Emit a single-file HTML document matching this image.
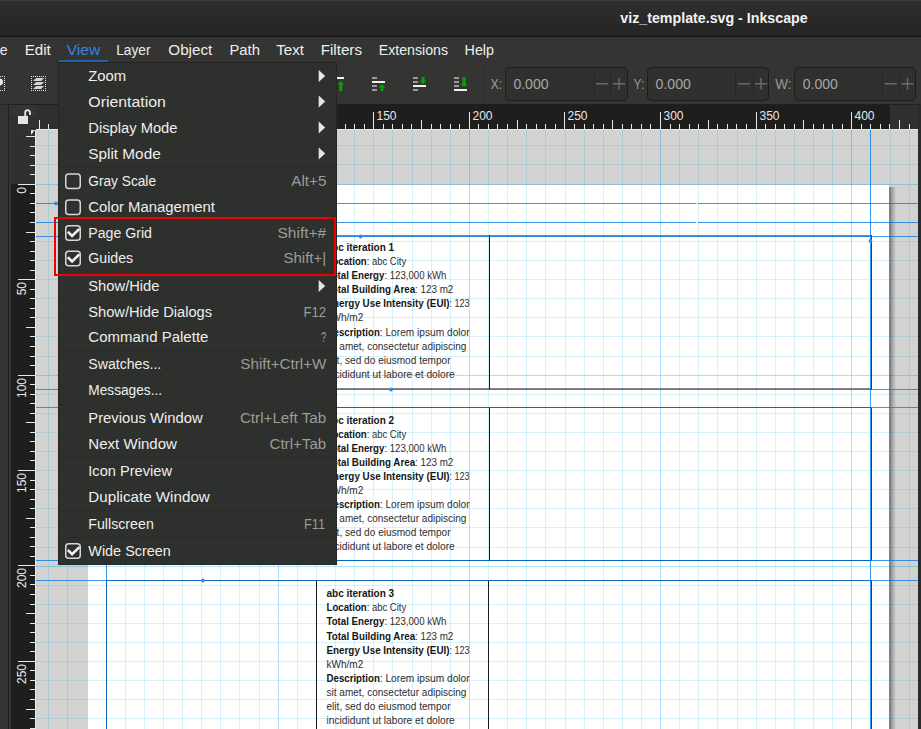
<!DOCTYPE html><html><head><meta charset="utf-8"><style>
html,body{margin:0;padding:0;background:#343532;width:921px;height:729px;overflow:hidden}
svg{display:block}
text{font-family:'Liberation Sans', sans-serif;white-space:pre}
</style></head><body>
<svg width="921" height="729" viewBox="0 0 921 729">
<rect x="0" y="0" width="921" height="729" fill="#343532"/>
<defs><linearGradient id="tg" x1="0" y1="0" x2="0" y2="1"><stop offset="0" stop-color="#2f2f2f"/><stop offset="1" stop-color="#252525"/></linearGradient></defs>
<rect x="0" y="0" width="921" height="36" fill="url(#tg)"/>
<rect x="0" y="36" width="921" height="1" fill="#141414"/>
<rect x="0" y="0" width="921" height="1" fill="#3a3a3a"/>
<rect x="0" y="62" width="921" height="1" fill="#30312e"/>
<rect x="0" y="104" width="921" height="1" fill="#282926"/>
<text x="620.3" y="22.9" font-size="15" fill="#f2f2f2" font-weight="bold" text-anchor="start" textLength="187.4" lengthAdjust="spacingAndGlyphs" >viz_template.svg - Inkscape</text>
<text x="7.6" y="54.6" font-size="14" fill="#eeeeec" font-weight="normal" text-anchor="end" >e</text>
<text x="24.7" y="54.6" font-size="14" fill="#eeeeec" font-weight="normal" text-anchor="start" textLength="26.1" lengthAdjust="spacingAndGlyphs" >Edit</text>
<text x="66.7" y="54.6" font-size="14" fill="#3584e4" font-weight="normal" text-anchor="start" textLength="33.5" lengthAdjust="spacingAndGlyphs" >View</text>
<text x="116.2" y="54.6" font-size="14" fill="#eeeeec" font-weight="normal" text-anchor="start" textLength="34.4" lengthAdjust="spacingAndGlyphs" >Layer</text>
<text x="168.3" y="54.6" font-size="14" fill="#eeeeec" font-weight="normal" text-anchor="start" textLength="44.0" lengthAdjust="spacingAndGlyphs" >Object</text>
<text x="229.4" y="54.6" font-size="14" fill="#eeeeec" font-weight="normal" text-anchor="start" textLength="30.5" lengthAdjust="spacingAndGlyphs" >Path</text>
<text x="276.2" y="54.6" font-size="14" fill="#eeeeec" font-weight="normal" text-anchor="start" textLength="27.7" lengthAdjust="spacingAndGlyphs" >Text</text>
<text x="320.7" y="54.6" font-size="14" fill="#eeeeec" font-weight="normal" text-anchor="start" textLength="41.3" lengthAdjust="spacingAndGlyphs" >Filters</text>
<text x="378.7" y="54.6" font-size="14" fill="#eeeeec" font-weight="normal" text-anchor="start" textLength="69.3" lengthAdjust="spacingAndGlyphs" >Extensions</text>
<text x="464.6" y="54.6" font-size="14" fill="#eeeeec" font-weight="normal" text-anchor="start" textLength="29.3" lengthAdjust="spacingAndGlyphs" >Help</text>
<rect x="59" y="60" width="49" height="2" fill="#1f5fb0"/>
<rect x="-10" y="76" width="1" height="1" fill="#e6e6e6"/><rect x="-10" y="90" width="1" height="1" fill="#e6e6e6"/><rect x="-8" y="76" width="1" height="1" fill="#e6e6e6"/><rect x="-8" y="90" width="1" height="1" fill="#e6e6e6"/><rect x="-6" y="76" width="1" height="1" fill="#e6e6e6"/><rect x="-6" y="90" width="1" height="1" fill="#e6e6e6"/><rect x="-4" y="76" width="1" height="1" fill="#e6e6e6"/><rect x="-4" y="90" width="1" height="1" fill="#e6e6e6"/><rect x="-2" y="76" width="1" height="1" fill="#e6e6e6"/><rect x="-2" y="90" width="1" height="1" fill="#e6e6e6"/><rect x="0" y="76" width="1" height="1" fill="#e6e6e6"/><rect x="0" y="90" width="1" height="1" fill="#e6e6e6"/><rect x="2" y="76" width="1" height="1" fill="#e6e6e6"/><rect x="2" y="90" width="1" height="1" fill="#e6e6e6"/><rect x="4" y="76" width="1" height="1" fill="#e6e6e6"/><rect x="4" y="90" width="1" height="1" fill="#e6e6e6"/><rect x="-10" y="76" width="1" height="1" fill="#e6e6e6"/><rect x="4" y="76" width="1" height="1" fill="#e6e6e6"/><rect x="-10" y="78" width="1" height="1" fill="#e6e6e6"/><rect x="4" y="78" width="1" height="1" fill="#e6e6e6"/><rect x="-10" y="80" width="1" height="1" fill="#e6e6e6"/><rect x="4" y="80" width="1" height="1" fill="#e6e6e6"/><rect x="-10" y="82" width="1" height="1" fill="#e6e6e6"/><rect x="4" y="82" width="1" height="1" fill="#e6e6e6"/><rect x="-10" y="84" width="1" height="1" fill="#e6e6e6"/><rect x="4" y="84" width="1" height="1" fill="#e6e6e6"/><rect x="-10" y="86" width="1" height="1" fill="#e6e6e6"/><rect x="4" y="86" width="1" height="1" fill="#e6e6e6"/><rect x="-10" y="88" width="1" height="1" fill="#e6e6e6"/><rect x="4" y="88" width="1" height="1" fill="#e6e6e6"/><rect x="-10" y="90" width="1" height="1" fill="#e6e6e6"/><rect x="4" y="90" width="1" height="1" fill="#e6e6e6"/>
<circle cx="-0.6" cy="82" r="3.6" fill="#e6e6e6"/>
<rect x="31" y="76" width="1" height="1" fill="#e6e6e6"/><rect x="31" y="90" width="1" height="1" fill="#e6e6e6"/><rect x="33" y="76" width="1" height="1" fill="#e6e6e6"/><rect x="33" y="90" width="1" height="1" fill="#e6e6e6"/><rect x="35" y="76" width="1" height="1" fill="#e6e6e6"/><rect x="35" y="90" width="1" height="1" fill="#e6e6e6"/><rect x="37" y="76" width="1" height="1" fill="#e6e6e6"/><rect x="37" y="90" width="1" height="1" fill="#e6e6e6"/><rect x="39" y="76" width="1" height="1" fill="#e6e6e6"/><rect x="39" y="90" width="1" height="1" fill="#e6e6e6"/><rect x="41" y="76" width="1" height="1" fill="#e6e6e6"/><rect x="41" y="90" width="1" height="1" fill="#e6e6e6"/><rect x="43" y="76" width="1" height="1" fill="#e6e6e6"/><rect x="43" y="90" width="1" height="1" fill="#e6e6e6"/><rect x="45" y="76" width="1" height="1" fill="#e6e6e6"/><rect x="45" y="90" width="1" height="1" fill="#e6e6e6"/><rect x="31" y="76" width="1" height="1" fill="#e6e6e6"/><rect x="45" y="76" width="1" height="1" fill="#e6e6e6"/><rect x="31" y="78" width="1" height="1" fill="#e6e6e6"/><rect x="45" y="78" width="1" height="1" fill="#e6e6e6"/><rect x="31" y="80" width="1" height="1" fill="#e6e6e6"/><rect x="45" y="80" width="1" height="1" fill="#e6e6e6"/><rect x="31" y="82" width="1" height="1" fill="#e6e6e6"/><rect x="45" y="82" width="1" height="1" fill="#e6e6e6"/><rect x="31" y="84" width="1" height="1" fill="#e6e6e6"/><rect x="45" y="84" width="1" height="1" fill="#e6e6e6"/><rect x="31" y="86" width="1" height="1" fill="#e6e6e6"/><rect x="45" y="86" width="1" height="1" fill="#e6e6e6"/><rect x="31" y="88" width="1" height="1" fill="#e6e6e6"/><rect x="45" y="88" width="1" height="1" fill="#e6e6e6"/><rect x="31" y="90" width="1" height="1" fill="#e6e6e6"/><rect x="45" y="90" width="1" height="1" fill="#e6e6e6"/>
<path d="M33 81 L36.2 78 L44 78 L41.2 81 Z" fill="#d4d4d2"/>
<path d="M33 85 L36.2 82 L44 82 L41.2 85 Z" fill="#d4d4d2"/>
<path d="M33 89 L36.2 86 L44 86 L41.2 89 Z" fill="#d4d4d2"/>
<rect x="337" y="77" width="7" height="2" fill="#f0f0f0"/>
<path d="M340.8 81 L344.3 84.5 L342.3 84.5 L342.3 91 L339.3 91 L339.3 84.5 L337.3 84.5 Z" fill="#00a300"/>
<rect x="372" y="77" width="5" height="2" fill="#9a9a9a"/>
<rect x="372" y="85" width="5" height="2" fill="#9a9a9a"/>
<rect x="372" y="89" width="5" height="2" fill="#9a9a9a"/>
<rect x="372" y="81" width="13" height="2" fill="#f0f0f0"/>
<path d="M382 84 L385.5 87.5 L383.5 87.5 L383.5 91 L380.5 91 L380.5 87.5 L378.5 87.5 Z" fill="#00a300"/>
<rect x="413" y="77" width="5" height="2" fill="#9a9a9a"/>
<rect x="413" y="81" width="5" height="2" fill="#9a9a9a"/>
<rect x="413" y="89" width="5" height="2" fill="#9a9a9a"/>
<rect x="413" y="85" width="13" height="2" fill="#f0f0f0"/>
<path d="M423 84 L426.5 80.5 L424.5 80.5 L424.5 77 L421.5 77 L421.5 80.5 L419.5 80.5 Z" fill="#00a300"/>
<rect x="454" y="77" width="5" height="2" fill="#9a9a9a"/>
<rect x="454" y="81" width="5" height="2" fill="#9a9a9a"/>
<rect x="454" y="85" width="5" height="2" fill="#9a9a9a"/>
<rect x="454" y="89" width="13" height="2" fill="#f0f0f0"/>
<path d="M464 87 L467.5 83.5 L465.5 83.5 L465.5 77 L462.5 77 L462.5 83.5 L460.5 83.5 Z" fill="#00a300"/>
<rect x="484" y="67" width="1" height="33" fill="#2b2b2b"/>
<text x="490.4" y="88.9" font-size="14" fill="#9a9a98" font-weight="normal" text-anchor="start" textLength="11.8" lengthAdjust="spacingAndGlyphs" >X:</text>
<rect x="505.5" y="67.5" width="122" height="33" rx="4" fill="#30312e" stroke="#1d1e1c" stroke-width="1"/>
<rect x="594" y="68" width="1" height="32" fill="#282927"/>
<rect x="610" y="68" width="1" height="32" fill="#282927"/>
<text x="513.4" y="88.9" font-size="14" fill="#a6a6a4" font-weight="normal" text-anchor="start" textLength="35.2" lengthAdjust="spacingAndGlyphs" >0.000</text>
<rect x="596.0" y="83" width="12" height="1.5" fill="#6a6a68"/>
<rect x="613.0" y="83" width="12" height="1.5" fill="#6a6a68"/>
<rect x="618.25" y="78" width="1.5" height="11.5" fill="#6a6a68"/>
<text x="633.6" y="88.9" font-size="14" fill="#9a9a98" font-weight="normal" text-anchor="start" textLength="10.7" lengthAdjust="spacingAndGlyphs" >Y:</text>
<rect x="647.5" y="67.5" width="121" height="33" rx="4" fill="#30312e" stroke="#1d1e1c" stroke-width="1"/>
<rect x="735" y="68" width="1" height="32" fill="#282927"/>
<rect x="753" y="68" width="1" height="32" fill="#282927"/>
<text x="655.6" y="88.9" font-size="14" fill="#a6a6a4" font-weight="normal" text-anchor="start" textLength="35.2" lengthAdjust="spacingAndGlyphs" >0.000</text>
<rect x="738.0" y="83" width="12" height="1.5" fill="#6a6a68"/>
<rect x="755.0" y="83" width="12" height="1.5" fill="#6a6a68"/>
<rect x="760.25" y="78" width="1.5" height="11.5" fill="#6a6a68"/>
<text x="775.2" y="88.9" font-size="14" fill="#9a9a98" font-weight="normal" text-anchor="start" textLength="16.2" lengthAdjust="spacingAndGlyphs" >W:</text>
<rect x="794.5" y="67.5" width="121" height="33" rx="4" fill="#30312e" stroke="#1d1e1c" stroke-width="1"/>
<rect x="882" y="68" width="1" height="32" fill="#282927"/>
<rect x="899" y="68" width="1" height="32" fill="#282927"/>
<text x="802.7" y="88.9" font-size="14" fill="#a6a6a4" font-weight="normal" text-anchor="start" textLength="35.2" lengthAdjust="spacingAndGlyphs" >0.000</text>
<rect x="884.5" y="83" width="12" height="1.5" fill="#6a6a68"/>
<rect x="901.5" y="83" width="12" height="1.5" fill="#6a6a68"/>
<rect x="906.75" y="78" width="1.5" height="11.5" fill="#6a6a68"/>
<rect x="8" y="105" width="1" height="624" fill="#1f201e"/>
<rect x="11" y="116" width="25" height="13" fill="#30312e"/>
<rect x="18" y="116" width="10" height="8" fill="#e6e6e6"/>
<path d="M25.2 116 L25.2 112.5 A2.4 2.4 0 0 1 30 112.5 L30 115" fill="none" stroke="#e6e6e6" stroke-width="1.8"/>
<defs><clipPath id="cv"><rect x="36" y="130" width="882" height="599"/></clipPath><linearGradient id="sh" x1="0" x2="1"><stop offset="0" stop-color="#000" stop-opacity="0.42"/><stop offset="1" stop-color="#000" stop-opacity="0"/></linearGradient></defs>
<g clip-path="url(#cv)" shape-rendering="crispEdges">
<rect x="36" y="130" width="882" height="599" fill="#d2d2d0"/>
<rect x="87" y="185" width="802" height="729" fill="#ffffff"/>
<rect x="48" y="130" width="1" height="599" fill="rgb(0,160,230)" fill-opacity="0.15"/><rect x="67" y="130" width="1" height="599" fill="rgb(0,160,230)" fill-opacity="0.15"/><rect x="87" y="130" width="1" height="599" fill="rgb(0,160,230)" fill-opacity="0.32"/><rect x="106" y="130" width="1" height="599" fill="rgb(0,160,230)" fill-opacity="0.15"/><rect x="125" y="130" width="1" height="599" fill="rgb(0,160,230)" fill-opacity="0.15"/><rect x="144" y="130" width="1" height="599" fill="rgb(0,160,230)" fill-opacity="0.15"/><rect x="163" y="130" width="1" height="599" fill="rgb(0,160,230)" fill-opacity="0.15"/><rect x="182" y="130" width="1" height="599" fill="rgb(0,160,230)" fill-opacity="0.15"/><rect x="201" y="130" width="1" height="599" fill="rgb(0,160,230)" fill-opacity="0.15"/><rect x="220" y="130" width="1" height="599" fill="rgb(0,160,230)" fill-opacity="0.15"/><rect x="239" y="130" width="1" height="599" fill="rgb(0,160,230)" fill-opacity="0.15"/><rect x="259" y="130" width="1" height="599" fill="rgb(0,160,230)" fill-opacity="0.15"/><rect x="278" y="130" width="1" height="599" fill="rgb(0,160,230)" fill-opacity="0.32"/><rect x="297" y="130" width="1" height="599" fill="rgb(0,160,230)" fill-opacity="0.15"/><rect x="316" y="130" width="1" height="599" fill="rgb(0,160,230)" fill-opacity="0.15"/><rect x="335" y="130" width="1" height="599" fill="rgb(0,160,230)" fill-opacity="0.15"/><rect x="354" y="130" width="1" height="599" fill="rgb(0,160,230)" fill-opacity="0.15"/><rect x="373" y="130" width="1" height="599" fill="rgb(0,160,230)" fill-opacity="0.15"/><rect x="392" y="130" width="1" height="599" fill="rgb(0,160,230)" fill-opacity="0.15"/><rect x="412" y="130" width="1" height="599" fill="rgb(0,160,230)" fill-opacity="0.15"/><rect x="431" y="130" width="1" height="599" fill="rgb(0,160,230)" fill-opacity="0.15"/><rect x="450" y="130" width="1" height="599" fill="rgb(0,160,230)" fill-opacity="0.15"/><rect x="469" y="130" width="1" height="599" fill="rgb(0,160,230)" fill-opacity="0.32"/><rect x="488" y="130" width="1" height="599" fill="rgb(0,160,230)" fill-opacity="0.15"/><rect x="507" y="130" width="1" height="599" fill="rgb(0,160,230)" fill-opacity="0.15"/><rect x="526" y="130" width="1" height="599" fill="rgb(0,160,230)" fill-opacity="0.15"/><rect x="545" y="130" width="1" height="599" fill="rgb(0,160,230)" fill-opacity="0.15"/><rect x="565" y="130" width="1" height="599" fill="rgb(0,160,230)" fill-opacity="0.15"/><rect x="584" y="130" width="1" height="599" fill="rgb(0,160,230)" fill-opacity="0.15"/><rect x="603" y="130" width="1" height="599" fill="rgb(0,160,230)" fill-opacity="0.15"/><rect x="622" y="130" width="1" height="599" fill="rgb(0,160,230)" fill-opacity="0.15"/><rect x="641" y="130" width="1" height="599" fill="rgb(0,160,230)" fill-opacity="0.15"/><rect x="660" y="130" width="1" height="599" fill="rgb(0,160,230)" fill-opacity="0.32"/><rect x="679" y="130" width="1" height="599" fill="rgb(0,160,230)" fill-opacity="0.15"/><rect x="698" y="130" width="1" height="599" fill="rgb(0,160,230)" fill-opacity="0.15"/><rect x="717" y="130" width="1" height="599" fill="rgb(0,160,230)" fill-opacity="0.15"/><rect x="737" y="130" width="1" height="599" fill="rgb(0,160,230)" fill-opacity="0.15"/><rect x="756" y="130" width="1" height="599" fill="rgb(0,160,230)" fill-opacity="0.15"/><rect x="775" y="130" width="1" height="599" fill="rgb(0,160,230)" fill-opacity="0.15"/><rect x="794" y="130" width="1" height="599" fill="rgb(0,160,230)" fill-opacity="0.15"/><rect x="813" y="130" width="1" height="599" fill="rgb(0,160,230)" fill-opacity="0.15"/><rect x="832" y="130" width="1" height="599" fill="rgb(0,160,230)" fill-opacity="0.15"/><rect x="851" y="130" width="1" height="599" fill="rgb(0,160,230)" fill-opacity="0.32"/><rect x="870" y="130" width="1" height="599" fill="rgb(0,160,230)" fill-opacity="0.15"/><rect x="890" y="130" width="1" height="599" fill="rgb(0,160,230)" fill-opacity="0.15"/><rect x="909" y="130" width="1" height="599" fill="rgb(0,160,230)" fill-opacity="0.15"/><rect x="36" y="145" width="882" height="1" fill="rgb(0,160,230)" fill-opacity="0.15"/><rect x="36" y="164" width="882" height="1" fill="rgb(0,160,230)" fill-opacity="0.15"/><rect x="36" y="184" width="882" height="1" fill="rgb(0,160,230)" fill-opacity="0.32"/><rect x="36" y="203" width="882" height="1" fill="rgb(0,160,230)" fill-opacity="0.15"/><rect x="36" y="222" width="882" height="1" fill="rgb(0,160,230)" fill-opacity="0.15"/><rect x="36" y="241" width="882" height="1" fill="rgb(0,160,230)" fill-opacity="0.15"/><rect x="36" y="260" width="882" height="1" fill="rgb(0,160,230)" fill-opacity="0.15"/><rect x="36" y="279" width="882" height="1" fill="rgb(0,160,230)" fill-opacity="0.15"/><rect x="36" y="298" width="882" height="1" fill="rgb(0,160,230)" fill-opacity="0.15"/><rect x="36" y="317" width="882" height="1" fill="rgb(0,160,230)" fill-opacity="0.15"/><rect x="36" y="336" width="882" height="1" fill="rgb(0,160,230)" fill-opacity="0.15"/><rect x="36" y="356" width="882" height="1" fill="rgb(0,160,230)" fill-opacity="0.15"/><rect x="36" y="375" width="882" height="1" fill="rgb(0,160,230)" fill-opacity="0.32"/><rect x="36" y="394" width="882" height="1" fill="rgb(0,160,230)" fill-opacity="0.15"/><rect x="36" y="413" width="882" height="1" fill="rgb(0,160,230)" fill-opacity="0.15"/><rect x="36" y="432" width="882" height="1" fill="rgb(0,160,230)" fill-opacity="0.15"/><rect x="36" y="451" width="882" height="1" fill="rgb(0,160,230)" fill-opacity="0.15"/><rect x="36" y="470" width="882" height="1" fill="rgb(0,160,230)" fill-opacity="0.15"/><rect x="36" y="489" width="882" height="1" fill="rgb(0,160,230)" fill-opacity="0.15"/><rect x="36" y="508" width="882" height="1" fill="rgb(0,160,230)" fill-opacity="0.15"/><rect x="36" y="527" width="882" height="1" fill="rgb(0,160,230)" fill-opacity="0.15"/><rect x="36" y="547" width="882" height="1" fill="rgb(0,160,230)" fill-opacity="0.15"/><rect x="36" y="566" width="882" height="1" fill="rgb(0,160,230)" fill-opacity="0.32"/><rect x="36" y="585" width="882" height="1" fill="rgb(0,160,230)" fill-opacity="0.15"/><rect x="36" y="604" width="882" height="1" fill="rgb(0,160,230)" fill-opacity="0.15"/><rect x="36" y="623" width="882" height="1" fill="rgb(0,160,230)" fill-opacity="0.15"/><rect x="36" y="642" width="882" height="1" fill="rgb(0,160,230)" fill-opacity="0.15"/><rect x="36" y="661" width="882" height="1" fill="rgb(0,160,230)" fill-opacity="0.15"/><rect x="36" y="680" width="882" height="1" fill="rgb(0,160,230)" fill-opacity="0.15"/><rect x="36" y="699" width="882" height="1" fill="rgb(0,160,230)" fill-opacity="0.15"/><rect x="36" y="718" width="882" height="1" fill="rgb(0,160,230)" fill-opacity="0.15"/>
<rect x="106" y="235" width="766" height="1" fill="#3a3a3a" fill-opacity="0.6"/>
<rect x="106" y="236" width="766" height="1" fill="#3a3a3a" fill-opacity="0.45"/>
<rect x="106" y="388" width="766" height="1" fill="#3a3a3a" fill-opacity="0.6"/>
<rect x="106" y="389" width="766" height="1" fill="#3a3a3a" fill-opacity="0.45"/>
<rect x="106" y="235" width="1" height="155" fill="#3a3a3a"/>
<rect x="871" y="235" width="1" height="155" fill="#3a3a3a"/>
<rect x="316" y="235" width="1" height="155" fill="#121920"/>
<rect x="489" y="235" width="1" height="155" fill="#121920"/>
<rect x="106" y="407" width="766" height="1" fill="#3a3a3a" fill-opacity="1.0"/>
<rect x="106" y="560" width="766" height="1" fill="#3a3a3a" fill-opacity="1.0"/>
<rect x="106" y="407" width="1" height="154" fill="#3a3a3a"/>
<rect x="871" y="407" width="1" height="154" fill="#3a3a3a"/>
<rect x="316" y="407" width="1" height="154" fill="#121920"/>
<rect x="489" y="407" width="1" height="154" fill="#121920"/>
<rect x="106" y="580" width="766" height="1" fill="#3a3a3a" fill-opacity="1.0"/>
<rect x="106" y="900" width="766" height="1" fill="#3a3a3a" fill-opacity="1.0"/>
<rect x="106" y="580" width="1" height="321" fill="#3a3a3a"/>
<rect x="871" y="580" width="1" height="321" fill="#3a3a3a"/>
<rect x="316" y="580" width="1" height="321" fill="#121920"/>
<rect x="488" y="580" width="1" height="321" fill="#121920"/>
<rect x="889" y="187" width="7" height="729" fill="url(#sh)" shape-rendering="auto"/>
<rect x="36" y="203" width="882" height="1" fill="rgb(0,120,230)" fill-opacity="0.75"/>
<rect x="36" y="222" width="882" height="1" fill="rgb(0,120,230)" fill-opacity="0.75"/>
<rect x="36" y="236" width="882" height="1" fill="rgb(0,120,230)" fill-opacity="0.75"/>
<rect x="36" y="389" width="882" height="1" fill="rgb(0,120,230)" fill-opacity="0.75"/>
<rect x="36" y="407" width="882" height="1" fill="rgb(0,120,230)" fill-opacity="0.75"/>
<rect x="36" y="560" width="882" height="1" fill="rgb(0,120,230)" fill-opacity="0.75"/>
<rect x="36" y="580" width="882" height="1" fill="rgb(0,120,230)" fill-opacity="0.75"/>
<rect x="106" y="130" width="1" height="599" fill="rgb(0,120,230)" fill-opacity="0.75"/>
<rect x="870" y="130" width="1" height="599" fill="rgb(0,120,230)" fill-opacity="0.75"/>
<rect x="696" y="203" width="2" height="1" fill="#d9f1fb"/>
<rect x="696" y="222" width="2" height="1" fill="#d9f1fb"/>
</g>
<circle cx="360.6" cy="236.5" r="1.9" fill="rgb(40,140,235)"/>
<circle cx="391" cy="389.5" r="1.9" fill="rgb(40,140,235)"/>
<circle cx="203" cy="580.5" r="1.9" fill="rgb(40,140,235)"/>
<circle cx="870.5" cy="241" r="1.9" fill="rgb(40,140,235)"/>
<circle cx="56" cy="203.5" r="1.9" fill="rgb(40,140,235)"/>
<text x="326.5" y="250.9" font-size="10" fill="#151515" font-weight="bold" text-anchor="start" textLength="67.6" lengthAdjust="spacingAndGlyphs" >abc iteration 1</text>
<text x="326.5" y="265.0" font-size="10" fill="#151515" font-weight="bold" text-anchor="start" textLength="40.2" lengthAdjust="spacingAndGlyphs" >Location</text>
<text x="366.7" y="265.0" font-size="10" fill="#2e2e2e" font-weight="normal" text-anchor="start" textLength="39.5" lengthAdjust="spacingAndGlyphs" >: abc City</text>
<text x="326.5" y="279.1" font-size="10" fill="#151515" font-weight="bold" text-anchor="start" textLength="57.9" lengthAdjust="spacingAndGlyphs" >Total Energy</text>
<text x="384.4" y="279.1" font-size="10" fill="#2e2e2e" font-weight="normal" text-anchor="start" textLength="62.0" lengthAdjust="spacingAndGlyphs" >: 123,000 kWh</text>
<text x="326.5" y="293.2" font-size="10" fill="#151515" font-weight="bold" text-anchor="start" textLength="88.6" lengthAdjust="spacingAndGlyphs" >Total Building Area</text>
<text x="415.1" y="293.2" font-size="10" fill="#2e2e2e" font-weight="normal" text-anchor="start" textLength="38.2" lengthAdjust="spacingAndGlyphs" >: 123 m2</text>
<text x="326.5" y="307.3" font-size="10" fill="#151515" font-weight="bold" text-anchor="start" textLength="123.0" lengthAdjust="spacingAndGlyphs" >Energy Use Intensity (EUI)</text>
<text x="449.5" y="307.3" font-size="10" fill="#2e2e2e" font-weight="normal" text-anchor="start" textLength="20.1" lengthAdjust="spacingAndGlyphs" >: 123</text>
<text x="326.5" y="321.4" font-size="10" fill="#2e2e2e" font-weight="normal" text-anchor="start" textLength="36.8" lengthAdjust="spacingAndGlyphs" >kWh/m2</text>
<text x="326.5" y="335.5" font-size="10" fill="#151515" font-weight="bold" text-anchor="start" textLength="53.3" lengthAdjust="spacingAndGlyphs" >Description</text>
<text x="379.8" y="335.5" font-size="10" fill="#2e2e2e" font-weight="normal" text-anchor="start" textLength="89.8" lengthAdjust="spacingAndGlyphs" >: Lorem ipsum dolor</text>
<text x="326.5" y="349.6" font-size="10" fill="#2e2e2e" font-weight="normal" text-anchor="start" textLength="139.9" lengthAdjust="spacingAndGlyphs" >sit amet, consectetur adipiscing</text>
<text x="326.5" y="363.7" font-size="10" fill="#2e2e2e" font-weight="normal" text-anchor="start" textLength="124.1" lengthAdjust="spacingAndGlyphs" >elit, sed do eiusmod tempor</text>
<text x="326.5" y="377.8" font-size="10" fill="#2e2e2e" font-weight="normal" text-anchor="start" textLength="128.3" lengthAdjust="spacingAndGlyphs" >incididunt ut labore et dolore</text>
<text x="326.5" y="423.5" font-size="10" fill="#151515" font-weight="bold" text-anchor="start" textLength="67.6" lengthAdjust="spacingAndGlyphs" >abc iteration 2</text>
<text x="326.5" y="437.6" font-size="10" fill="#151515" font-weight="bold" text-anchor="start" textLength="40.2" lengthAdjust="spacingAndGlyphs" >Location</text>
<text x="366.7" y="437.6" font-size="10" fill="#2e2e2e" font-weight="normal" text-anchor="start" textLength="39.5" lengthAdjust="spacingAndGlyphs" >: abc City</text>
<text x="326.5" y="451.7" font-size="10" fill="#151515" font-weight="bold" text-anchor="start" textLength="57.9" lengthAdjust="spacingAndGlyphs" >Total Energy</text>
<text x="384.4" y="451.7" font-size="10" fill="#2e2e2e" font-weight="normal" text-anchor="start" textLength="62.0" lengthAdjust="spacingAndGlyphs" >: 123,000 kWh</text>
<text x="326.5" y="465.8" font-size="10" fill="#151515" font-weight="bold" text-anchor="start" textLength="88.6" lengthAdjust="spacingAndGlyphs" >Total Building Area</text>
<text x="415.1" y="465.8" font-size="10" fill="#2e2e2e" font-weight="normal" text-anchor="start" textLength="38.2" lengthAdjust="spacingAndGlyphs" >: 123 m2</text>
<text x="326.5" y="479.9" font-size="10" fill="#151515" font-weight="bold" text-anchor="start" textLength="123.0" lengthAdjust="spacingAndGlyphs" >Energy Use Intensity (EUI)</text>
<text x="449.5" y="479.9" font-size="10" fill="#2e2e2e" font-weight="normal" text-anchor="start" textLength="20.1" lengthAdjust="spacingAndGlyphs" >: 123</text>
<text x="326.5" y="494.0" font-size="10" fill="#2e2e2e" font-weight="normal" text-anchor="start" textLength="36.8" lengthAdjust="spacingAndGlyphs" >kWh/m2</text>
<text x="326.5" y="508.1" font-size="10" fill="#151515" font-weight="bold" text-anchor="start" textLength="53.3" lengthAdjust="spacingAndGlyphs" >Description</text>
<text x="379.8" y="508.1" font-size="10" fill="#2e2e2e" font-weight="normal" text-anchor="start" textLength="89.8" lengthAdjust="spacingAndGlyphs" >: Lorem ipsum dolor</text>
<text x="326.5" y="522.2" font-size="10" fill="#2e2e2e" font-weight="normal" text-anchor="start" textLength="139.9" lengthAdjust="spacingAndGlyphs" >sit amet, consectetur adipiscing</text>
<text x="326.5" y="536.3" font-size="10" fill="#2e2e2e" font-weight="normal" text-anchor="start" textLength="124.1" lengthAdjust="spacingAndGlyphs" >elit, sed do eiusmod tempor</text>
<text x="326.5" y="550.4" font-size="10" fill="#2e2e2e" font-weight="normal" text-anchor="start" textLength="128.3" lengthAdjust="spacingAndGlyphs" >incididunt ut labore et dolore</text>
<text x="326.5" y="597.2" font-size="10" fill="#151515" font-weight="bold" text-anchor="start" textLength="67.6" lengthAdjust="spacingAndGlyphs" >abc iteration 3</text>
<text x="326.5" y="611.3" font-size="10" fill="#151515" font-weight="bold" text-anchor="start" textLength="40.2" lengthAdjust="spacingAndGlyphs" >Location</text>
<text x="366.7" y="611.3" font-size="10" fill="#2e2e2e" font-weight="normal" text-anchor="start" textLength="39.5" lengthAdjust="spacingAndGlyphs" >: abc City</text>
<text x="326.5" y="625.4" font-size="10" fill="#151515" font-weight="bold" text-anchor="start" textLength="57.9" lengthAdjust="spacingAndGlyphs" >Total Energy</text>
<text x="384.4" y="625.4" font-size="10" fill="#2e2e2e" font-weight="normal" text-anchor="start" textLength="62.0" lengthAdjust="spacingAndGlyphs" >: 123,000 kWh</text>
<text x="326.5" y="639.5" font-size="10" fill="#151515" font-weight="bold" text-anchor="start" textLength="88.6" lengthAdjust="spacingAndGlyphs" >Total Building Area</text>
<text x="415.1" y="639.5" font-size="10" fill="#2e2e2e" font-weight="normal" text-anchor="start" textLength="38.2" lengthAdjust="spacingAndGlyphs" >: 123 m2</text>
<text x="326.5" y="653.6" font-size="10" fill="#151515" font-weight="bold" text-anchor="start" textLength="123.0" lengthAdjust="spacingAndGlyphs" >Energy Use Intensity (EUI)</text>
<text x="449.5" y="653.6" font-size="10" fill="#2e2e2e" font-weight="normal" text-anchor="start" textLength="20.1" lengthAdjust="spacingAndGlyphs" >: 123</text>
<text x="326.5" y="667.7" font-size="10" fill="#2e2e2e" font-weight="normal" text-anchor="start" textLength="36.8" lengthAdjust="spacingAndGlyphs" >kWh/m2</text>
<text x="326.5" y="681.8" font-size="10" fill="#151515" font-weight="bold" text-anchor="start" textLength="53.3" lengthAdjust="spacingAndGlyphs" >Description</text>
<text x="379.8" y="681.8" font-size="10" fill="#2e2e2e" font-weight="normal" text-anchor="start" textLength="89.8" lengthAdjust="spacingAndGlyphs" >: Lorem ipsum dolor</text>
<text x="326.5" y="695.9" font-size="10" fill="#2e2e2e" font-weight="normal" text-anchor="start" textLength="139.9" lengthAdjust="spacingAndGlyphs" >sit amet, consectetur adipiscing</text>
<text x="326.5" y="710.0" font-size="10" fill="#2e2e2e" font-weight="normal" text-anchor="start" textLength="124.1" lengthAdjust="spacingAndGlyphs" >elit, sed do eiusmod tempor</text>
<text x="326.5" y="724.1" font-size="10" fill="#2e2e2e" font-weight="normal" text-anchor="start" textLength="128.3" lengthAdjust="spacingAndGlyphs" >incididunt ut labore et dolore</text>
<g shape-rendering="crispEdges">
<rect x="36" y="105" width="882" height="24" fill="#30312e"/>
<rect x="87" y="105" width="803" height="24" fill="#1e1f1d"/>
<rect x="36" y="129" width="882" height="1" fill="#e8e8e8"/>
<rect x="9" y="104" width="909" height="1" fill="#1f201e"/>
<rect x="39" y="120" width="1" height="9" fill="#e8e8e8"/><rect x="48" y="124" width="1" height="5" fill="#e8e8e8"/><rect x="58" y="124" width="1" height="5" fill="#e8e8e8"/><rect x="67" y="124" width="1" height="5" fill="#e8e8e8"/><rect x="77" y="124" width="1" height="5" fill="#e8e8e8"/><rect x="86" y="112" width="1" height="17" fill="#e8e8e8"/><rect x="96" y="124" width="1" height="5" fill="#e8e8e8"/><rect x="106" y="124" width="1" height="5" fill="#e8e8e8"/><rect x="115" y="124" width="1" height="5" fill="#e8e8e8"/><rect x="125" y="124" width="1" height="5" fill="#e8e8e8"/><rect x="134" y="120" width="1" height="9" fill="#e8e8e8"/><rect x="144" y="124" width="1" height="5" fill="#e8e8e8"/><rect x="153" y="124" width="1" height="5" fill="#e8e8e8"/><rect x="163" y="124" width="1" height="5" fill="#e8e8e8"/><rect x="172" y="124" width="1" height="5" fill="#e8e8e8"/><rect x="182" y="112" width="1" height="17" fill="#e8e8e8"/><rect x="192" y="124" width="1" height="5" fill="#e8e8e8"/><rect x="201" y="124" width="1" height="5" fill="#e8e8e8"/><rect x="211" y="124" width="1" height="5" fill="#e8e8e8"/><rect x="220" y="124" width="1" height="5" fill="#e8e8e8"/><rect x="230" y="120" width="1" height="9" fill="#e8e8e8"/><rect x="239" y="124" width="1" height="5" fill="#e8e8e8"/><rect x="249" y="124" width="1" height="5" fill="#e8e8e8"/><rect x="258" y="124" width="1" height="5" fill="#e8e8e8"/><rect x="268" y="124" width="1" height="5" fill="#e8e8e8"/><rect x="278" y="112" width="1" height="17" fill="#e8e8e8"/><rect x="287" y="124" width="1" height="5" fill="#e8e8e8"/><rect x="297" y="124" width="1" height="5" fill="#e8e8e8"/><rect x="306" y="124" width="1" height="5" fill="#e8e8e8"/><rect x="316" y="124" width="1" height="5" fill="#e8e8e8"/><rect x="325" y="120" width="1" height="9" fill="#e8e8e8"/><rect x="335" y="124" width="1" height="5" fill="#e8e8e8"/><rect x="345" y="124" width="1" height="5" fill="#e8e8e8"/><rect x="354" y="124" width="1" height="5" fill="#e8e8e8"/><rect x="364" y="124" width="1" height="5" fill="#e8e8e8"/><rect x="373" y="112" width="1" height="17" fill="#e8e8e8"/><rect x="383" y="124" width="1" height="5" fill="#e8e8e8"/><rect x="392" y="124" width="1" height="5" fill="#e8e8e8"/><rect x="402" y="124" width="1" height="5" fill="#e8e8e8"/><rect x="411" y="124" width="1" height="5" fill="#e8e8e8"/><rect x="421" y="120" width="1" height="9" fill="#e8e8e8"/><rect x="431" y="124" width="1" height="5" fill="#e8e8e8"/><rect x="440" y="124" width="1" height="5" fill="#e8e8e8"/><rect x="450" y="124" width="1" height="5" fill="#e8e8e8"/><rect x="459" y="124" width="1" height="5" fill="#e8e8e8"/><rect x="469" y="112" width="1" height="17" fill="#e8e8e8"/><rect x="478" y="124" width="1" height="5" fill="#e8e8e8"/><rect x="488" y="124" width="1" height="5" fill="#e8e8e8"/><rect x="497" y="124" width="1" height="5" fill="#e8e8e8"/><rect x="507" y="124" width="1" height="5" fill="#e8e8e8"/><rect x="517" y="120" width="1" height="9" fill="#e8e8e8"/><rect x="526" y="124" width="1" height="5" fill="#e8e8e8"/><rect x="536" y="124" width="1" height="5" fill="#e8e8e8"/><rect x="545" y="124" width="1" height="5" fill="#e8e8e8"/><rect x="555" y="124" width="1" height="5" fill="#e8e8e8"/><rect x="564" y="112" width="1" height="17" fill="#e8e8e8"/><rect x="574" y="124" width="1" height="5" fill="#e8e8e8"/><rect x="584" y="124" width="1" height="5" fill="#e8e8e8"/><rect x="593" y="124" width="1" height="5" fill="#e8e8e8"/><rect x="603" y="124" width="1" height="5" fill="#e8e8e8"/><rect x="612" y="120" width="1" height="9" fill="#e8e8e8"/><rect x="622" y="124" width="1" height="5" fill="#e8e8e8"/><rect x="631" y="124" width="1" height="5" fill="#e8e8e8"/><rect x="641" y="124" width="1" height="5" fill="#e8e8e8"/><rect x="650" y="124" width="1" height="5" fill="#e8e8e8"/><rect x="660" y="112" width="1" height="17" fill="#e8e8e8"/><rect x="670" y="124" width="1" height="5" fill="#e8e8e8"/><rect x="679" y="124" width="1" height="5" fill="#e8e8e8"/><rect x="689" y="124" width="1" height="5" fill="#e8e8e8"/><rect x="698" y="124" width="1" height="5" fill="#e8e8e8"/><rect x="708" y="120" width="1" height="9" fill="#e8e8e8"/><rect x="717" y="124" width="1" height="5" fill="#e8e8e8"/><rect x="727" y="124" width="1" height="5" fill="#e8e8e8"/><rect x="736" y="124" width="1" height="5" fill="#e8e8e8"/><rect x="746" y="124" width="1" height="5" fill="#e8e8e8"/><rect x="756" y="112" width="1" height="17" fill="#e8e8e8"/><rect x="765" y="124" width="1" height="5" fill="#e8e8e8"/><rect x="775" y="124" width="1" height="5" fill="#e8e8e8"/><rect x="784" y="124" width="1" height="5" fill="#e8e8e8"/><rect x="794" y="124" width="1" height="5" fill="#e8e8e8"/><rect x="803" y="120" width="1" height="9" fill="#e8e8e8"/><rect x="813" y="124" width="1" height="5" fill="#e8e8e8"/><rect x="823" y="124" width="1" height="5" fill="#e8e8e8"/><rect x="832" y="124" width="1" height="5" fill="#e8e8e8"/><rect x="842" y="124" width="1" height="5" fill="#e8e8e8"/><rect x="851" y="112" width="1" height="17" fill="#e8e8e8"/><rect x="861" y="124" width="1" height="5" fill="#e8e8e8"/><rect x="870" y="124" width="1" height="5" fill="#e8e8e8"/><rect x="880" y="124" width="1" height="5" fill="#e8e8e8"/><rect x="889" y="124" width="1" height="5" fill="#e8e8e8"/><rect x="899" y="120" width="1" height="9" fill="#e8e8e8"/><rect x="909" y="124" width="1" height="5" fill="#e8e8e8"/>
</g>
<text x="89.5" y="120" font-size="12" fill="#e8e8e8" font-weight="normal" text-anchor="start" >0</text>
<text x="185.5" y="120" font-size="12" fill="#e8e8e8" font-weight="normal" text-anchor="start" >50</text>
<text x="281.5" y="120" font-size="12" fill="#e8e8e8" font-weight="normal" text-anchor="start" >100</text>
<text x="376.5" y="120" font-size="12" fill="#e8e8e8" font-weight="normal" text-anchor="start" >150</text>
<text x="472.5" y="120" font-size="12" fill="#e8e8e8" font-weight="normal" text-anchor="start" >200</text>
<text x="567.5" y="120" font-size="12" fill="#e8e8e8" font-weight="normal" text-anchor="start" >250</text>
<text x="663.5" y="120" font-size="12" fill="#e8e8e8" font-weight="normal" text-anchor="start" >300</text>
<text x="759.5" y="120" font-size="12" fill="#e8e8e8" font-weight="normal" text-anchor="start" >350</text>
<text x="854.5" y="120" font-size="12" fill="#e8e8e8" font-weight="normal" text-anchor="start" >400</text>
<g shape-rendering="crispEdges">
<rect x="11" y="130" width="25" height="599" fill="#1e1f1d"/>
<rect x="11" y="130" width="25" height="54" fill="#30312e"/>
<rect x="35" y="130" width="1" height="599" fill="#e8e8e8"/>
<rect x="26" y="136" width="9" height="1" fill="#e8e8e8"/><rect x="30" y="146" width="5" height="1" fill="#e8e8e8"/><rect x="30" y="155" width="5" height="1" fill="#e8e8e8"/><rect x="30" y="165" width="5" height="1" fill="#e8e8e8"/><rect x="30" y="174" width="5" height="1" fill="#e8e8e8"/><rect x="18" y="184" width="17" height="1" fill="#e8e8e8"/><rect x="30" y="193" width="5" height="1" fill="#e8e8e8"/><rect x="30" y="203" width="5" height="1" fill="#e8e8e8"/><rect x="30" y="212" width="5" height="1" fill="#e8e8e8"/><rect x="30" y="222" width="5" height="1" fill="#e8e8e8"/><rect x="26" y="232" width="9" height="1" fill="#e8e8e8"/><rect x="30" y="241" width="5" height="1" fill="#e8e8e8"/><rect x="30" y="251" width="5" height="1" fill="#e8e8e8"/><rect x="30" y="260" width="5" height="1" fill="#e8e8e8"/><rect x="30" y="270" width="5" height="1" fill="#e8e8e8"/><rect x="18" y="279" width="17" height="1" fill="#e8e8e8"/><rect x="30" y="289" width="5" height="1" fill="#e8e8e8"/><rect x="30" y="298" width="5" height="1" fill="#e8e8e8"/><rect x="30" y="308" width="5" height="1" fill="#e8e8e8"/><rect x="30" y="317" width="5" height="1" fill="#e8e8e8"/><rect x="26" y="327" width="9" height="1" fill="#e8e8e8"/><rect x="30" y="336" width="5" height="1" fill="#e8e8e8"/><rect x="30" y="346" width="5" height="1" fill="#e8e8e8"/><rect x="30" y="356" width="5" height="1" fill="#e8e8e8"/><rect x="30" y="365" width="5" height="1" fill="#e8e8e8"/><rect x="18" y="375" width="17" height="1" fill="#e8e8e8"/><rect x="30" y="384" width="5" height="1" fill="#e8e8e8"/><rect x="30" y="394" width="5" height="1" fill="#e8e8e8"/><rect x="30" y="403" width="5" height="1" fill="#e8e8e8"/><rect x="30" y="413" width="5" height="1" fill="#e8e8e8"/><rect x="26" y="422" width="9" height="1" fill="#e8e8e8"/><rect x="30" y="432" width="5" height="1" fill="#e8e8e8"/><rect x="30" y="441" width="5" height="1" fill="#e8e8e8"/><rect x="30" y="451" width="5" height="1" fill="#e8e8e8"/><rect x="30" y="460" width="5" height="1" fill="#e8e8e8"/><rect x="18" y="470" width="17" height="1" fill="#e8e8e8"/><rect x="30" y="480" width="5" height="1" fill="#e8e8e8"/><rect x="30" y="489" width="5" height="1" fill="#e8e8e8"/><rect x="30" y="499" width="5" height="1" fill="#e8e8e8"/><rect x="30" y="508" width="5" height="1" fill="#e8e8e8"/><rect x="26" y="518" width="9" height="1" fill="#e8e8e8"/><rect x="30" y="527" width="5" height="1" fill="#e8e8e8"/><rect x="30" y="537" width="5" height="1" fill="#e8e8e8"/><rect x="30" y="546" width="5" height="1" fill="#e8e8e8"/><rect x="30" y="556" width="5" height="1" fill="#e8e8e8"/><rect x="18" y="565" width="17" height="1" fill="#e8e8e8"/><rect x="30" y="575" width="5" height="1" fill="#e8e8e8"/><rect x="30" y="584" width="5" height="1" fill="#e8e8e8"/><rect x="30" y="594" width="5" height="1" fill="#e8e8e8"/><rect x="30" y="604" width="5" height="1" fill="#e8e8e8"/><rect x="26" y="613" width="9" height="1" fill="#e8e8e8"/><rect x="30" y="623" width="5" height="1" fill="#e8e8e8"/><rect x="30" y="632" width="5" height="1" fill="#e8e8e8"/><rect x="30" y="642" width="5" height="1" fill="#e8e8e8"/><rect x="30" y="651" width="5" height="1" fill="#e8e8e8"/><rect x="18" y="661" width="17" height="1" fill="#e8e8e8"/><rect x="30" y="670" width="5" height="1" fill="#e8e8e8"/><rect x="30" y="680" width="5" height="1" fill="#e8e8e8"/><rect x="30" y="689" width="5" height="1" fill="#e8e8e8"/><rect x="30" y="699" width="5" height="1" fill="#e8e8e8"/><rect x="26" y="709" width="9" height="1" fill="#e8e8e8"/><rect x="30" y="718" width="5" height="1" fill="#e8e8e8"/><rect x="30" y="728" width="5" height="1" fill="#e8e8e8"/>
</g>
<text x="0" y="0" font-size="12" fill="#e8e8e8" font-weight="normal" text-anchor="end" transform="translate(26.3,187) rotate(-90)">0</text>
<text x="0" y="0" font-size="12" fill="#e8e8e8" font-weight="normal" text-anchor="end" transform="translate(26.3,282) rotate(-90)">50</text>
<text x="0" y="0" font-size="12" fill="#e8e8e8" font-weight="normal" text-anchor="end" transform="translate(26.3,378) rotate(-90)">100</text>
<text x="0" y="0" font-size="12" fill="#e8e8e8" font-weight="normal" text-anchor="end" transform="translate(26.3,473) rotate(-90)">150</text>
<text x="0" y="0" font-size="12" fill="#e8e8e8" font-weight="normal" text-anchor="end" transform="translate(26.3,568) rotate(-90)">200</text>
<text x="0" y="0" font-size="12" fill="#e8e8e8" font-weight="normal" text-anchor="end" transform="translate(26.3,664) rotate(-90)">250</text>
<path d="M31 130 L35 130 L31 135 Z" fill="#e0e0de"/>
<rect x="918" y="105" width="3" height="624" fill="#2b2b2b"/>
<rect x="58" y="62" width="279" height="503" fill="#2e302d"/>
<rect x="58.5" y="62.5" width="278" height="502" fill="none" stroke="#252624" stroke-width="1"/>
<rect x="59" y="167" width="277" height="1" fill="#292a28"/>
<rect x="59" y="275" width="277" height="1" fill="#292a28"/>
<rect x="59" y="351" width="277" height="1" fill="#292a28"/>
<rect x="59" y="404" width="277" height="1" fill="#292a28"/>
<rect x="59" y="457" width="277" height="1" fill="#292a28"/>
<rect x="59" y="510" width="277" height="1" fill="#292a28"/>
<rect x="59" y="537" width="277" height="1" fill="#292a28"/>
<text x="88.3" y="81" font-size="14" fill="#eeeeec" font-weight="normal" text-anchor="start" textLength="37.9" lengthAdjust="spacingAndGlyphs" >Zoom</text>
<path d="M318.7 70 L325.2 76 L318.7 82 Z" fill="#e6e6e4"/>
<text x="88.3" y="106.6" font-size="14" fill="#eeeeec" font-weight="normal" text-anchor="start" textLength="77.6" lengthAdjust="spacingAndGlyphs" >Orientation</text>
<path d="M318.7 95.6 L325.2 101.6 L318.7 107.6 Z" fill="#e6e6e4"/>
<text x="88.3" y="132.6" font-size="14" fill="#eeeeec" font-weight="normal" text-anchor="start" textLength="89.2" lengthAdjust="spacingAndGlyphs" >Display Mode</text>
<path d="M318.7 121.6 L325.2 127.6 L318.7 133.6 Z" fill="#e6e6e4"/>
<text x="88.3" y="158.5" font-size="14" fill="#eeeeec" font-weight="normal" text-anchor="start" textLength="72.4" lengthAdjust="spacingAndGlyphs" >Split Mode</text>
<path d="M318.7 147.5 L325.2 153.5 L318.7 159.5 Z" fill="#e6e6e4"/>
<text x="88.3" y="185.9" font-size="14" fill="#eeeeec" font-weight="normal" text-anchor="start" textLength="67.7" lengthAdjust="spacingAndGlyphs" >Gray Scale</text>
<rect x="65.75" y="173.95000000000002" width="14.5" height="14.5" rx="3" fill="none" stroke="#d8d8d6" stroke-width="1.5"/>
<text x="291.3" y="185.9" font-size="14" fill="#9c9c98" font-weight="normal" text-anchor="start" textLength="35.2" lengthAdjust="spacingAndGlyphs" >Alt+5</text>
<text x="88.3" y="212" font-size="14" fill="#eeeeec" font-weight="normal" text-anchor="start" textLength="126.7" lengthAdjust="spacingAndGlyphs" >Color Management</text>
<rect x="65.75" y="200.05" width="14.5" height="14.5" rx="3" fill="none" stroke="#d8d8d6" stroke-width="1.5"/>
<text x="88.3" y="237.6" font-size="14" fill="#eeeeec" font-weight="normal" text-anchor="start" textLength="63.7" lengthAdjust="spacingAndGlyphs" >Page Grid</text>
<rect x="65.75" y="225.65" width="14.5" height="14.5" rx="3" fill="none" stroke="#d8d8d6" stroke-width="1.5"/>
<path d="M68.8 232.70000000000002 L72.1 235.9 L78.4 229.8" fill="none" stroke="#f2f2f2" stroke-width="2.6" stroke-linecap="square"/>
<text x="277.5" y="237.6" font-size="14" fill="#9c9c98" font-weight="normal" text-anchor="start" textLength="48.7" lengthAdjust="spacingAndGlyphs" >Shift+#</text>
<text x="88.3" y="263.1" font-size="14" fill="#eeeeec" font-weight="normal" text-anchor="start" textLength="44.8" lengthAdjust="spacingAndGlyphs" >Guides</text>
<rect x="65.75" y="251.15000000000003" width="14.5" height="14.5" rx="3" fill="none" stroke="#d8d8d6" stroke-width="1.5"/>
<path d="M68.8 258.20000000000005 L72.1 261.40000000000003 L78.4 255.30000000000004" fill="none" stroke="#f2f2f2" stroke-width="2.6" stroke-linecap="square"/>
<text x="283.4" y="263.1" font-size="14" fill="#9c9c98" font-weight="normal" text-anchor="start" textLength="42.8" lengthAdjust="spacingAndGlyphs" >Shift+|</text>
<text x="88.3" y="291" font-size="14" fill="#eeeeec" font-weight="normal" text-anchor="start" textLength="71.2" lengthAdjust="spacingAndGlyphs" >Show/Hide</text>
<path d="M318.7 280 L325.2 286 L318.7 292 Z" fill="#e6e6e4"/>
<text x="88.3" y="316.6" font-size="14" fill="#eeeeec" font-weight="normal" text-anchor="start" textLength="123.8" lengthAdjust="spacingAndGlyphs" >Show/Hide Dialogs</text>
<text x="303.5" y="316.6" font-size="14" fill="#9c9c98" font-weight="normal" text-anchor="start" textLength="22.7" lengthAdjust="spacingAndGlyphs" >F12</text>
<text x="88.3" y="342.1" font-size="14" fill="#eeeeec" font-weight="normal" text-anchor="start" textLength="120.1" lengthAdjust="spacingAndGlyphs" >Command Palette</text>
<text x="321.1" y="342.1" font-size="14" fill="#9c9c98" font-weight="normal" text-anchor="start" textLength="5.1" lengthAdjust="spacingAndGlyphs" >?</text>
<text x="88.3" y="369.1" font-size="14" fill="#eeeeec" font-weight="normal" text-anchor="start" textLength="73.0" lengthAdjust="spacingAndGlyphs" >Swatches...</text>
<text x="240.3" y="369.1" font-size="14" fill="#9c9c98" font-weight="normal" text-anchor="start" textLength="86.1" lengthAdjust="spacingAndGlyphs" >Shift+Ctrl+W</text>
<text x="88.3" y="395" font-size="14" fill="#eeeeec" font-weight="normal" text-anchor="start" textLength="73.8" lengthAdjust="spacingAndGlyphs" >Messages...</text>
<text x="88.3" y="422.9" font-size="14" fill="#eeeeec" font-weight="normal" text-anchor="start" textLength="114.5" lengthAdjust="spacingAndGlyphs" >Previous Window</text>
<text x="239.9" y="422.9" font-size="14" fill="#9c9c98" font-weight="normal" text-anchor="start" textLength="86.3" lengthAdjust="spacingAndGlyphs" >Ctrl+Left Tab</text>
<text x="88.3" y="448.8" font-size="14" fill="#eeeeec" font-weight="normal" text-anchor="start" textLength="88.7" lengthAdjust="spacingAndGlyphs" >Next Window</text>
<text x="269.5" y="448.8" font-size="14" fill="#9c9c98" font-weight="normal" text-anchor="start" textLength="56.7" lengthAdjust="spacingAndGlyphs" >Ctrl+Tab</text>
<text x="88.3" y="475.8" font-size="14" fill="#eeeeec" font-weight="normal" text-anchor="start" textLength="83.7" lengthAdjust="spacingAndGlyphs" >Icon Preview</text>
<text x="88.3" y="501.6" font-size="14" fill="#eeeeec" font-weight="normal" text-anchor="start" textLength="121.5" lengthAdjust="spacingAndGlyphs" >Duplicate Window</text>
<text x="88.3" y="528.8" font-size="14" fill="#eeeeec" font-weight="normal" text-anchor="start" textLength="65.5" lengthAdjust="spacingAndGlyphs" >Fullscreen</text>
<text x="304.0" y="528.8" font-size="14" fill="#9c9c98" font-weight="normal" text-anchor="start" textLength="21.1" lengthAdjust="spacingAndGlyphs" >F11</text>
<text x="88.3" y="555.8" font-size="14" fill="#eeeeec" font-weight="normal" text-anchor="start" textLength="82.5" lengthAdjust="spacingAndGlyphs" >Wide Screen</text>
<rect x="65.75" y="543.8499999999999" width="14.5" height="14.5" rx="3" fill="none" stroke="#d8d8d6" stroke-width="1.5"/>
<path d="M68.8 550.8999999999999 L72.1 554.0999999999999 L78.4 547.9999999999999" fill="none" stroke="#f2f2f2" stroke-width="2.6" stroke-linecap="square"/>
<rect x="55" y="218" width="280" height="57" fill="none" stroke="#f00000" stroke-width="2"/>
</svg></body></html>
